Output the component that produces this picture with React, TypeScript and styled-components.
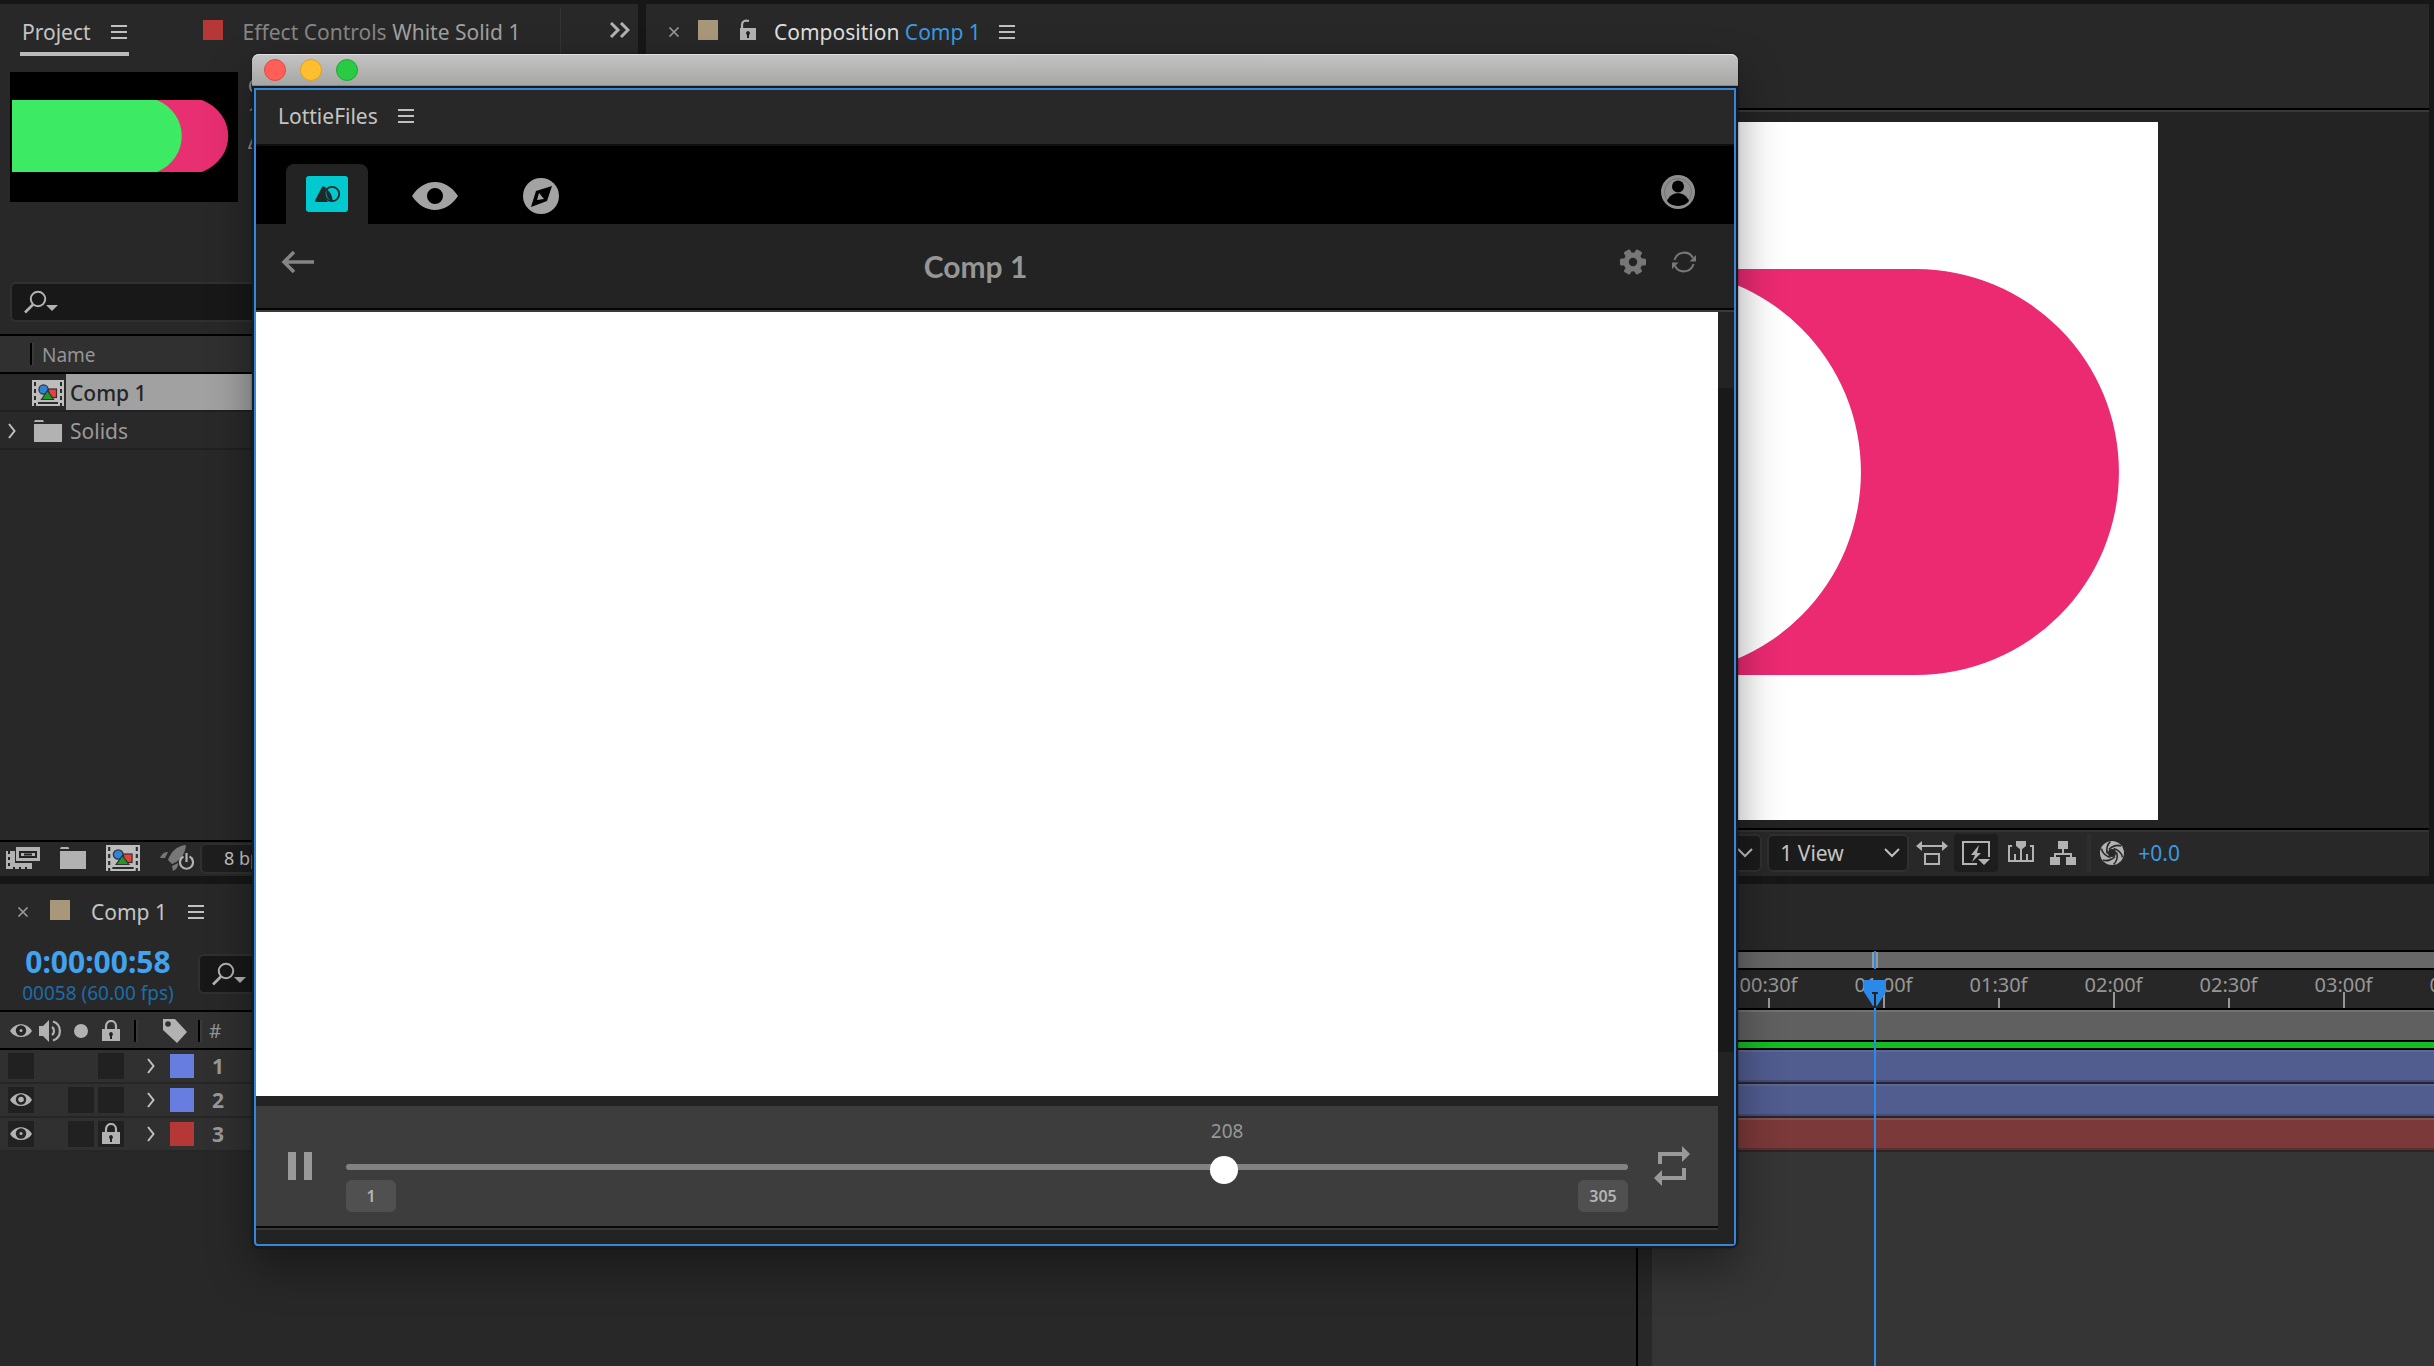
import React from "react";
import styled, { createGlobalStyle } from "styled-components";

const color = {
  gap: "#171717",
  panel: "#282828",
  raised: "#303030",
  well: "#232323",
  field: "#181818",
  fieldEdge: "#303030",
  line: "#000000",
  text: "#c4c4c4",
  muted: "#959595",
  icon: "#b2b2b2",
  blue: "#3b9ae0",
  accent: "#2b8ae8",
  tan: "#a89779",
  red: "#b53837",
  violet: "#687de0",
  pink: "#eb2a72",
};

const GlobalStyle = createGlobalStyle`
  *, *::before, *::after { box-sizing: border-box; }
  body {
    margin: 0;
    background: ${color.gap};
    color: ${color.text};
    font-family: "Noto Sans", "Open Sans", sans-serif;
    font-size: 21px;
    line-height: 28px;
  }
  button, input, select { font: inherit; color: inherit; }
  button { padding: 0; border: 0; background: none; display: flex; align-items: center; justify-content: center; }
  svg { display: block; flex: none; }
`;

const Screen = styled.div`
  position: relative;
  display: grid;
  grid-template-rows: minmax(0, 872fr) minmax(0, 482fr);
  gap: 8px;
  height: 100vh;
  padding-top: 4px;
  overflow: hidden;
`;

const Workspace = styled.div`
  display: grid;
  grid-template-columns: 638px minmax(0, 1fr);
  gap: 8px;
  padding-right: 5px;
`;

const Panel = styled.section`
  display: flex;
  flex-direction: column;
  min-width: 0;
  min-height: 0;
  background: ${color.panel};
`;

/* ---------- shared parts ---------- */

const TabBar = styled.div<{ $start: number }>`
  display: flex;
  align-items: stretch;
  height: 52px;
  padding: 4px 8px 0 ${(p) => p.$start}px;
`;

const Tab = styled.div<{ $gap?: number; $active?: boolean }>`
  display: flex;
  align-items: center;
  gap: ${(p) => p.$gap ?? 20}px;
  padding: 0 ${(p) => (p.$active ? 2 : 0)}px;
  color: ${color.text};
  white-space: nowrap;
  box-shadow: ${(p) => (p.$active ? "inset 0 -4px #bbbbbb" : "none")};
`;

const TabTitle = styled.span<{ $tone?: string }>`
  color: ${(p) => p.$tone ?? color.text};
`;

const Swatch = styled.span<{ $fill: string; $size?: number }>`
  flex: none;
  width: ${(p) => p.$size ?? 20}px;
  height: ${(p) => p.$size ?? 20}px;
  background: ${(p) => p.$fill};

  ${Tab} > & {
    margin-bottom: 4px;
  }
`;

const Divider = styled.span<{ $tone?: string; $before?: number; $height?: number }>`
  flex: none;
  width: 2px;
  height: ${(p) => p.$height ?? 22}px;
  margin-left: ${(p) => p.$before ?? 0}px;
  background: ${(p) => p.$tone ?? color.line};
  box-shadow: 2px 0 ${(p) => p.$tone ?? "#3a3a3a"};
`;

const SearchBox = styled.label`
  display: flex;
  align-items: center;
  gap: 10px;
  height: 40px;
  padding: 0 12px;
  background: ${color.field};
  border: 2px solid ${color.fieldEdge};
  border-radius: 6px;
`;

const SearchInput = styled.input`
  flex: 1;
  min-width: 0;
  border: 0;
  outline: 0;
  background: transparent;
`;

const MenuIcon = () => (
  <svg width="16" height="16" viewBox="0 0 16 16">
    <path d="M0 2h16M0 8h16M0 14h16" stroke="#c0c0c0" strokeWidth="2" />
  </svg>
);

const MenuButton = () => (
  <button aria-label="Panel menu">
    <MenuIcon />
  </button>
);

const CloseButton = () => (
  <button aria-label="Close">
    <svg width="12" height="10" viewBox="0 0 12 10">
      <path d="M1.500 0.500l9 9M10.500 0.500l-9 9" stroke="#999" strokeWidth="1.600" />
    </svg>
  </button>
);

const SearchIcon = () => (
  <svg width="34" height="24" viewBox="0 0 34 24">
    <circle cx="14" cy="9" r="7.200" fill="none" stroke={color.icon} strokeWidth="2" />
    <path d="M9 14.500L1 22.500" stroke={color.icon} strokeWidth="2.600" />
    <path d="M22 15h12l-6 6z" fill={color.icon} />
  </svg>
);

const FolderIcon = ({ width }: { width: number }) => (
  <svg width={width} height="22" viewBox="0 0 28 22" preserveAspectRatio="none">
    <path d="M0 2l1-2h8l1 2z M0 4h28v18h-28z" fill={color.icon} />
  </svg>
);

const CompIcon = ({ width }: { width: number }) => (
  <svg width={width} height="26" viewBox="0 0 32 26" preserveAspectRatio="none">
    <path d="M0 0h32v26h-32z" fill="#bdbdbd" />
    <path d="M3 2v24M29 2v24" stroke="#2b2b2b" strokeWidth="2" strokeDasharray="4 3" />
    <path d="M6 23h20" stroke="#2b2b2b" strokeWidth="2" />
    <rect x="16.500" y="9" width="8" height="8.500" fill="#e8413c" stroke="#333" strokeWidth="1.200" />
    <circle cx="11.500" cy="9.500" r="4.600" fill="#2f84dd" stroke="#333" strokeWidth="1.200" />
    <path d="M15.500 10.500l6 9h-12z" fill="#1d9a2a" stroke="#333" strokeWidth="1.200" />
  </svg>
);

const ChevronRight = () => (
  <svg width="8" height="16" viewBox="0 0 8 16">
    <path d="M1 1l5.500 7L1 15" fill="none" stroke="#c0c0c0" strokeWidth="2" />
  </svg>
);

const ChevronDown = () => (
  <svg width="16" height="10" viewBox="0 0 16 10">
    <path d="M1 1l7 7 7-7" fill="none" stroke="#c0c0c0" strokeWidth="2" />
  </svg>
);

const EyeIcon = ({ faint }: { faint?: boolean }) => (
  <svg width="22" height="16" viewBox="0 0 22 16">
    <path d="M0 8C5-1 17-1 22 8C17 16 5 16 0 8z" fill={color.icon} />
    <circle cx="11" cy="7.500" r="5.200" fill="#252525" />
    <circle cx="11" cy="7.500" r={faint ? 1.5 : 2.8} fill={color.icon} />
  </svg>
);

const LockIcon = () => (
  <svg width="18" height="22" viewBox="0 0 18 22">
    <path d="M4 10V6a5 5 0 0 1 10 0v4" fill="none" stroke={color.icon} strokeWidth="2.200" />
    <path d="M0 9h18v12h-18z" fill={color.icon} />
    <path d="M9 12a2.200 2.200 0 0 1 1 4v3h-2v-3a2.200 2.200 0 0 1 1-4z" fill="#222" />
  </svg>
);

/* ---------- project panel ---------- */

const ProjectTabs = styled(TabBar)`
  gap: 30px;
`;

const EffectTab = styled(Tab)`
  margin-left: 44px;
`;

const TabEdge = styled.span`
  width: 1px;
  margin-left: 10px;
  background: #333333;
`;

const Overflow = styled.button`
  margin-left: auto;
  padding-bottom: 4px;
`;

const Preview = styled.div`
  display: flex;
  gap: 10px;
  padding: 16px 10px 0;
`;

const PreviewFacts = styled.div`
  color: ${color.muted};
  font-size: 19px;
  line-height: 28px;
`;

const ProjectSearch = styled.div`
  padding: 80px 10px 12px;
`;

const ColumnHeader = styled.div`
  display: flex;
  align-items: center;
  height: 40px;
  border: solid ${color.line};
  border-width: 2px 0;
  background: ${color.raised};
  color: ${color.muted};
  font-size: 19px;
`;

const ColumnName = styled.span`
  padding: 2px 0 0 10px;
`;

const Item = styled.div`
  display: flex;
  align-items: stretch;
  height: 38px;
  background: #292929;
  border-bottom: 2px solid #202020;
`;

const ItemToggle = styled.div`
  display: flex;
  align-items: center;
  width: 32px;
  padding: 2px 0 0 8px;
`;

const ItemIcon = styled.div`
  display: flex;
  align-items: center;
  justify-content: center;
  width: 32px;
  margin-right: 2px;
  padding-top: 2px;
`;

const ItemName = styled.div<{ $selected?: boolean }>`
  display: flex;
  flex: 1;
  align-items: center;
  padding: 2px 0 0 4px;
  background: ${(p) => (p.$selected ? "#a1a1a1" : "transparent")};
  color: ${(p) => (p.$selected ? "#242424" : "#9a9a9a")};
  font-weight: ${(p) => (p.$selected ? 500 : 400)};
`;

const Footer = styled.div<{ $end?: boolean }>`
  display: flex;
  align-items: center;
  justify-content: ${(p) => (p.$end ? "flex-end" : "flex-start")};
  margin-top: auto;
  border-top: 2px solid ${color.line};
`;

const ProjectFooter = styled(Footer)`
  gap: 20px;
  height: 36px;
  padding: 0 6px 2px;
`;

const DepthButton = styled.button`
  height: 31px;
  margin-left: -14px;
  padding: 0 22px;
  background: #1e1e1e;
  border: 2px solid ${color.fieldEdge};
  border-radius: 6px;
  font-size: 18px;
  white-space: nowrap;
`;

const ProjectPanel = () => (
  <Panel>
    <ProjectTabs $start={20}>
      <Tab $active>
        <TabTitle>Project</TabTitle>
        <MenuButton />
      </Tab>
      <EffectTab>
        <Swatch $fill={color.red} />
        <span>
          <TabTitle $tone="#858585">Effect Controls </TabTitle>
          <TabTitle $tone="#a0a0a0">White Solid 1</TabTitle>
        </span>
      </EffectTab>
      <TabEdge />
      <Overflow aria-label="More panels">
        <svg width="20" height="16" viewBox="0 0 20 16">
          <path d="M1 1l7 7-7 7M11 1l7 7-7 7" fill="none" stroke={color.icon} strokeWidth="3" />
        </svg>
      </Overflow>
    </ProjectTabs>
    <Preview>
      <svg width="228" height="130" viewBox="0 0 228 130">
        <path d="M0 0h228v130h-228z" fill="#000" />
        <path d="M140 28h52c35 14 35 58 0 72h-52z" fill="#e82f72" />
        <path d="M2 28h145c33 14 33 58 0 72h-145z" fill="#3cea64" />
      </svg>
      <PreviewFacts>
        <div>C</div>
        <div>1</div>
        <div>Δ</div>
      </PreviewFacts>
    </Preview>
    <ProjectSearch>
      <SearchBox>
        <SearchIcon />
        <SearchInput aria-label="Search project" />
      </SearchBox>
    </ProjectSearch>
    <ColumnHeader>
      <Divider $before={30} />
      <ColumnName>Name</ColumnName>
    </ColumnHeader>
    <Item>
      <ItemToggle />
      <ItemIcon>
        <CompIcon width={32} />
      </ItemIcon>
      <ItemName $selected>Comp 1</ItemName>
    </Item>
    <Item>
      <ItemToggle>
        <ChevronRight />
      </ItemToggle>
      <ItemIcon>
        <FolderIcon width={28} />
      </ItemIcon>
      <ItemName>Solids</ItemName>
    </Item>
    <ProjectFooter>
      <button aria-label="Interpret footage">
        <svg width="34" height="24" viewBox="0 0 34 24">
          <path d="M0 5h9v12h17v6h-26z" fill={color.icon} />
          <path d="M9 0h25v16h-25z" fill={color.panel} />
          <path d="M10 1h24v14h-24z" fill={color.icon} />
          <path d="M14 6h16v5h-16z" fill="none" stroke="#222" strokeWidth="2" />
          <path d="M18 8.500h8" stroke="#222" strokeWidth="2" />
          <path d="M3 5v3M3 11v3M3 17v3M8 21v2M14 21v2M20 21v2" stroke="#222" strokeWidth="2" />
        </svg>
      </button>
      <button aria-label="New folder">
        <FolderIcon width={26} />
      </button>
      <button aria-label="New composition">
        <CompIcon width={34} />
      </button>
      <button aria-label="Project settings">
        <svg width="34" height="28" viewBox="0 0 34 28">
          <path d="M26 1C16 2 11 8 8 16l4 4C20 17 25 11 26 1z M8 8c-4 0-6 2-8 6h5z M12 22l6-3c0 4-1 6-5 8z" fill="#777" />
          <path d="M23.500 12.500a6.500 6.500 0 1 0 6 0M26.500 9v9" fill="none" stroke={color.icon} strokeWidth="2.200" />
        </svg>
      </button>
      <DepthButton>8 bpc</DepthButton>
    </ProjectFooter>
  </Panel>
);

/* ---------- composition panel ---------- */

const Viewer = styled.div`
  display: flex;
  flex: 1;
  justify-content: center;
  min-height: 0;
  margin-top: 52px;
  padding: 12px 0 8px;
  background: ${color.well};
  border-top: 2px solid ${color.line};
  box-shadow: inset 0 2px #383838;
`;

const ViewerFooter = styled(Footer)`
  height: 48px;
  padding: 0 249px 0 0;
  box-shadow: inset 0 2px #333333;
`;

const SelectBox = styled.div<{ $width: number }>`
  position: relative;
  display: flex;
  align-items: center;
  width: ${(p) => p.$width}px;
  height: 38px;
  margin-right: 5px;

  svg {
    position: absolute;
    right: 9px;
    pointer-events: none;
  }
`;

const Select = styled.select`
  width: 100%;
  height: 100%;
  padding: 0 30px 0 11px;
  appearance: none;
  background: #1b1b1b;
  border: 2px solid ${color.fieldEdge};
  border-radius: 6px;
`;

const ToolButton = styled.button<{ $on?: boolean; $width: number }>`
  width: ${(p) => p.$width}px;
  height: 38px;
  margin-left: ${(p) => (p.$on ? 4 : 0)}px;
  border-radius: 4px;
  background: ${(p) => (p.$on ? "#1d1d1d" : "transparent")};
`;

const Exposure = styled.button`
  margin-left: 3px;
  color: ${color.blue};
`;

const Aperture = () => (
  <svg width="24" height="24" viewBox="0 0 24 24">
    <circle cx="12" cy="12" r="12" fill={color.icon} />
    <circle cx="12" cy="12" r="4" fill={color.panel} />
    {[0, 60, 120, 180, 240, 300].map((turn) => (
      <path
        key={turn}
        d="M9 8.500C12 5 17 3.500 21 5"
        transform={`rotate(${turn} 12 12)`}
        fill="none"
        stroke={color.panel}
        strokeWidth="1.600"
      />
    ))}
  </svg>
);

const CompositionPanel = () => (
  <Panel>
    <TabBar $start={22}>
      <Tab $gap={18}>
        <CloseButton />
        <Swatch $fill={color.tan} />
        <svg width="20" height="26" viewBox="-3 0 20 26">
          <path d="M3 11V6c0-4 3-5 7-4" fill="none" stroke={color.icon} strokeWidth="2.200" />
          <path d="M1 9h16v12h-16z" fill={color.icon} />
          <path d="M9 12a2.200 2.200 0 0 1 1 4v3h-2v-3a2.200 2.200 0 0 1 1-4z" fill="#222" />
        </svg>
        <span>
          <TabTitle $tone="#dedede">Composition </TabTitle>
          <TabTitle $tone={color.blue}>Comp 1</TabTitle>
        </span>
        <MenuButton />
      </Tab>
    </TabBar>
    <Viewer>
      <svg height="100%" viewBox="0 0 1241 698">
        <path d="M0 0h1241v698h-1241z" fill="#fff" />
        <path d="M741 147h258a203 203 0 0 1 0 406h-258a203 203 0 0 0 0-406z" fill={color.pink} />
      </svg>
    </Viewer>
    <ViewerFooter $end>
      <SelectBox $width={142}>
        <Select aria-label="3D view" />
        <ChevronDown />
      </SelectBox>
      <SelectBox $width={142}>
        <Select aria-label="View layout" defaultValue="1">
          <option value="1">1 View</option>
        </Select>
        <ChevronDown />
      </SelectBox>
      <ToolButton $width={36} aria-label="Pixel aspect ratio">
        <svg width="32" height="24" viewBox="0 0 32 24">
          <path d="M4 5h24" stroke={color.icon} strokeWidth="2" />
          <path d="M0 5l6-5v10zM32 5l-6-5v10z" fill={color.icon} />
          <path d="M9 13h14v10h-14z" fill="none" stroke={color.icon} strokeWidth="2" />
        </svg>
      </ToolButton>
      <ToolButton $on $width={44} aria-label="Fast previews">
        <svg width="28" height="24" viewBox="0 0 28 24">
          <path d="M15 23H1V1h26v15" fill="none" stroke={color.icon} strokeWidth="2" />
          <path d="M17 4l-8 10h4l-3 7 9-9h-4z M16 18h12l-6 6z" fill={color.icon} />
        </svg>
      </ToolButton>
      <ToolButton $width={46} aria-label="Timeline">
        <svg width="26" height="24" viewBox="0 0 26 24">
          <path d="M4 5H1v15h24V5h-3M7 20v-7M13 20v-13M19 20v-7" fill="none" stroke={color.icon} strokeWidth="2" />
          <path d="M8 0h10v5l-5 4-5-4z" fill={color.icon} />
        </svg>
      </ToolButton>
      <ToolButton $width={38} aria-label="Flowchart">
        <svg width="26" height="24" viewBox="0 0 26 24">
          <path d="M8 0h10v8h-10zM0 16h10v8h-10zM16 16h10v8h-10z" fill={color.icon} />
          <path d="M13 8v5M5 17v-4h16v4" fill="none" stroke={color.icon} strokeWidth="2" />
        </svg>
      </ToolButton>
      <Divider $before={5} $height={38} $tone="#2e2e2e" />
      <ToolButton $width={46} aria-label="Reset exposure">
        <Aperture />
      </ToolButton>
      <Exposure>+0.0</Exposure>
    </ViewerFooter>
  </Panel>
);

/* ---------- timeline ---------- */

const Timeline = styled.section`
  display: grid;
  grid-template-columns: 1638fr 14px 782fr;
  background: ${color.panel};
`;

const Outline = styled.div`
  border-right: 2px solid ${color.line};
`;

const TimelineTabs = styled(TabBar)`
  height: 56px;
  padding-top: 0;
`;

const TimeRow = styled.div`
  display: flex;
  align-items: center;
  gap: 18px;
  height: 70px;
  padding: 0 16px;
`;

const TimeReadout = styled.div`
  width: 164px;
  text-align: center;
  white-space: nowrap;
`;

const Timecode = styled.div`
  color: #41a2ee;
  font-size: 30px;
  line-height: 36px;
  font-weight: 700;
`;

const FrameCount = styled.div`
  color: #1c6ca8;
  font-size: 19px;
  line-height: 26px;
`;

const TimelineSearch = styled(SearchBox)`
  width: 400px;
  margin-bottom: 2px;
`;

const LayerHeader = styled.div`
  display: flex;
  align-items: center;
  gap: 4px;
  height: 40px;
  padding: 2px 0 0 8px;
  border: solid ${color.line};
  border-width: 2px 0;
  background: ${color.raised};
  color: ${color.muted};
  font-size: 19px;
`;

const Cell = styled.div<{ $filled?: boolean }>`
  display: flex;
  align-items: center;
  justify-content: center;
  width: 26px;
  height: 26px;
  background: ${(p) => (p.$filled ? "#212121" : "transparent")};
`;

const TagCell = styled.div`
  display: flex;
  justify-content: center;
  width: 54px;
  padding-left: 16px;
`;

const HeaderText = styled.span`
  margin-left: 5px;
`;

const LayerRow = styled.div`
  display: flex;
  align-items: center;
  gap: 4px;
  height: 34px;
  padding-left: 8px;
  background: ${color.raised};
  border-bottom: 2px solid #262626;
`;

const Expand = styled.button`
  width: 30px;
  height: 26px;
  margin-left: 8px;
`;

const LayerNumber = styled.span`
  margin-left: 14px;
  color: #999999;
  font-weight: 700;
`;

const Tracks = styled.div`
  position: relative;
  margin-top: 66px;
  overflow: hidden;
  background: #353535;
`;

const Navigator = styled.div`
  height: 20px;
  border: solid ${color.line};
  border-width: 2px 0;
  background: #676767;
`;

const Ruler = styled.div`
  display: flex;
  height: 38px;
  padding: 1px 0 0 59px;
  background: #272727;
  color: #979797;
  font-size: 20px;
`;

const Mark = styled.div<{ $major: boolean }>`
  display: flex;
  flex: none;
  flex-direction: column;
  align-items: center;
  justify-content: space-between;
  width: 115px;

  &::after {
    content: "";
    width: 2px;
    height: ${(p) => (p.$major ? 16 : 10)}px;
    margin-top: -7px;
    background: #979797;
  }
`;

const WorkArea = styled.div`
  height: 34px;
  border: solid ${color.line};
  border-width: 2px 0;
  background: #606060;
  box-shadow: inset 0 2px #727272;
`;

const CacheBar = styled.div`
  height: 8px;
  background: #13bd22;
  border-bottom: 2px solid ${color.line};
`;

const Bar = styled.div<{ $fill: string; $top: string; $bottom: string }>`
  height: 34px;
  background: ${(p) => p.$fill};
  border-bottom: 2px solid #26262b;
  box-shadow: inset 0 2px ${(p) => p.$top}, inset 0 -2px ${(p) => p.$bottom};
`;

const Playhead = styled.svg`
  position: absolute;
  top: 0;
  left: 211px;
`;

const PlayheadLine = styled.span`
  position: absolute;
  top: 58px;
  bottom: 0;
  left: 222px;
  width: 2px;
  background: ${color.accent};
`;

const layers = [
  { id: 1, fill: color.violet, visible: false, solo: false, locked: false },
  { id: 2, fill: color.violet, visible: true, solo: true, locked: false },
  { id: 3, fill: color.red, visible: true, solo: true, locked: true },
];

const marks = ["00:30f", "01:00f", "01:30f", "02:00f", "02:30f", "03:00f", "03:30f"];

const TimelinePanel = () => (
  <Timeline>
    <Outline>
      <TimelineTabs $start={17}>
        <Tab $gap={21}>
          <CloseButton />
          <Swatch $fill={color.tan} />
          <TabTitle>Comp 1</TabTitle>
          <MenuButton />
        </Tab>
      </TimelineTabs>
      <TimeRow>
        <TimeReadout>
          <Timecode>0:00:00:58</Timecode>
          <FrameCount>00058 (60.00 fps)</FrameCount>
        </TimeReadout>
        <TimelineSearch>
          <SearchIcon />
          <SearchInput aria-label="Search layers" />
        </TimelineSearch>
      </TimeRow>
      <LayerHeader>
        <Cell>
          <EyeIcon faint />
        </Cell>
        <Cell>
          <svg width="24" height="22" viewBox="0 0 24 22">
            <path d="M0 6h4l6-6v22l-6-6H0z" fill={color.icon} />
            <path d="M13 7a5 5 0 0 1 0 8M14 1.500a10 10 0 0 1 0 19" fill="none" stroke={color.icon} strokeWidth="2.200" />
          </svg>
        </Cell>
        <Cell>
          <svg width="14" height="14" viewBox="0 0 14 14">
            <circle cx="7" cy="7" r="7" fill={color.icon} />
          </svg>
        </Cell>
        <Cell>
          <LockIcon />
        </Cell>
        <Divider $before={6} />
        <TagCell>
          <svg width="24" height="24" viewBox="0 0 24 24">
            <path d="M0 0h12l12 13-10 11L0 11z" fill={color.icon} />
            <circle cx="5" cy="5" r="2.800" fill="#303030" />
          </svg>
        </TagCell>
        <Divider />
        <HeaderText>#</HeaderText>
      </LayerHeader>
      {layers.map((layer) => (
        <LayerRow key={layer.id}>
          <Cell $filled>{layer.visible && <EyeIcon faint={layer.locked} />}</Cell>
          <Cell />
          <Cell $filled={layer.solo} />
          <Cell $filled>{layer.locked && <LockIcon />}</Cell>
          <Expand aria-label="Expand layer">
            <ChevronRight />
          </Expand>
          <Swatch $fill={layer.fill} $size={24} />
          <LayerNumber>{layer.id}</LayerNumber>
        </LayerRow>
      ))}
    </Outline>
    <span />
    <Tracks>
      <Navigator />
      <Ruler>
        {marks.map((label, index) => (
          <Mark key={label} $major={index % 2 === 1}>
            {label}
          </Mark>
        ))}
      </Ruler>
      <WorkArea />
      <CacheBar />
      <Bar $fill="#515c8f" $top="#5d6794" $bottom="#434c7c" />
      <Bar $fill="#515c8f" $top="#5d6794" $bottom="#434c7c" />
      <Bar $fill="#7b3939" $top="#86504e" $bottom="#652c2c" />
      <PlayheadLine />
      <Playhead width="24" height="58" viewBox="0 0 24 58">
        <path d="M9 2h6v16h-6z" fill="#999" />
        <path d="M11 1h2v18h-2z" fill={color.accent} />
        <path d="M1 30h22v12l-9 14h-4l-9-14z" fill={color.accent} />
        <path d="M9 43h6M12 43v14" stroke="#222" strokeWidth="2" />
      </Playhead>
    </Tracks>
  </Timeline>
);

/* ---------- floating LottieFiles window ---------- */

const Window = styled.section`
  position: absolute;
  top: 54px;
  left: 252px;
  width: 1486px;
  background: #161c26;
  border-radius: 7px;
  padding: 0 2px 2px;
  box-shadow: 0 20px 44px rgba(0, 0, 0, 0.38), 0 0 2px rgba(0, 0, 0, 0.6);
`;

const TitleBar = styled.header`
  display: flex;
  align-items: center;
  gap: 14px;
  height: 32px;
  margin: 0 -2px 2px;
  padding: 0 12px;
  border-radius: 7px 7px 0 0;
  border-bottom: 1px solid #858585;
  background: linear-gradient(#c4c4c4, #a6a6a4);
  box-shadow: inset 0 1px #e2e2e2;
`;

const TrafficLight = styled.button<{ $fill: string; $edge: string }>`
  width: 22px;
  height: 22px;
  border: 1px solid ${(p) => p.$edge};
  border-radius: 50%;
  background: ${(p) => p.$fill};
`;

const WindowBody = styled.div`
  border: 2px solid #3a86d6;
  border-radius: 0 0 4px 4px;
  background: ${color.well};
`;

const WindowTitle = styled.div`
  display: flex;
  align-items: center;
  gap: 20px;
  height: 56px;
  padding: 0 0 2px 22px;
  background: ${color.panel};
  border-bottom: 2px solid #0e0e0e;
`;

const NavBar = styled.nav`
  display: flex;
  align-items: flex-end;
  gap: 12px;
  height: 78px;
  padding: 0 30px;
  background: #000000;
`;

const NavTab = styled.button<{ $active?: boolean; $width: number }>`
  width: ${(p) => p.$width}px;
  height: 60px;
  padding-top: ${(p) => (p.$active ? 0 : 3)}px;
  border-radius: 8px 8px 0 0;
  background: ${(p) => (p.$active ? color.well : "transparent")};
`;

const Account = styled.button`
  height: 64px;
  margin-left: auto;
  padding-right: 9px;
`;

const CompHeader = styled.div`
  display: flex;
  align-items: center;
  height: 88px;
  padding: 0 38px 3px 25px;
  border-bottom: 2px solid #3a3a3a;
  box-shadow: inset 0 -2px #050505;
`;

const CompTitle = styled.h1`
  flex: 1;
  margin: 0 0 0 16px;
  color: #969696;
  font-family: Lato, "Noto Sans", sans-serif;
  font-size: 30px;
  line-height: 36px;
  font-weight: 700;
  text-align: center;
`;

const HeaderActions = styled.div`
  display: flex;
  gap: 26px;
  padding-bottom: 7px;
`;

const BackButton = styled.button`
  padding-bottom: 7px;
`;

const PlayerArea = styled.div`
  display: grid;
  grid-template-columns: minmax(0, 1fr) 16px;
`;

const ScrollGutter = styled.div`
  padding: 76px 0 192px;
  background: ${color.well};
`;

const ScrollThumb = styled.div`
  height: 100%;
  background: #191919;
`;

const Stage = styled.div`
  height: 784px;
  background: #ffffff;
`;

const Controls = styled.div`
  display: flex;
  gap: 26px;
  height: 122px;
  margin: 10px 0 16px;
  padding: 0 28px 0 32px;
  background: #3d3d3d;
  border-bottom: 2px solid #090909;
  box-shadow: 0 2px #383838;
`;

const ControlButton = styled.button`
  height: 120px;
`;

const Scrubber = styled.div`
  position: relative;
  flex: 1;
  margin-left: 8px;
  padding-top: 47px;
`;

const Range = styled.input`
  display: block;
  width: 100%;
  height: 27px;
  margin: 0;
  appearance: none;
  background: transparent;

  &::-webkit-slider-runnable-track {
    height: 6px;
    border-radius: 3px;
    background: #828282;
  }

  &::-webkit-slider-thumb {
    width: 28px;
    height: 28px;
    margin-top: -8px;
    appearance: none;
    border-radius: 50%;
    background: #ffffff;
  }
`;

const CurrentFrame = styled.output`
  position: absolute;
  top: 11px;
  padding-left: 6px;
  transform: translateX(-50%);
  color: #989898;
  font-size: 19px;
  line-height: 28px;
`;

const Bounds = styled.div`
  display: flex;
  justify-content: space-between;
`;

const Bound = styled.span`
  width: 50px;
  border-radius: 6px;
  background: #505050;
  color: #b4b4b4;
  font-size: 16px;
  line-height: 32px;
  font-weight: 600;
  text-align: center;
`;

const player = { first: 1, last: 305, shown: 208, position: 210.5 };

const LottieWindow = () => {
  const progress = (player.position - player.first) / (player.last - player.first);
  return (
    <Window>
      <TitleBar>
        <TrafficLight aria-label="Close window" $fill="#ff5f57" $edge="#de4a43" />
        <TrafficLight aria-label="Minimise window" $fill="#ffbf2f" $edge="#dda123" />
        <TrafficLight aria-label="Zoom window" $fill="#28cb41" $edge="#1daa31" />
      </TitleBar>
      <WindowBody>
        <WindowTitle>
          <TabTitle>LottieFiles</TabTitle>
          <MenuButton />
        </WindowTitle>
        <NavBar>
          <NavTab $active $width={82} aria-label="Render">
            <svg width="42" height="36" viewBox="0 0 42 36">
              <rect width="42" height="36" rx="3" fill="#00c9cf" />
              <path d="M9 24.500L16 11q1-1.500 3 0l1 1q-3.500 7 2 14H10q-1.500-.5-1-1.500z" fill="#202828" />
              <circle cx="26" cy="18" r="7.200" fill="none" stroke="#202828" strokeWidth="1.800" />
              <path d="M20.500 13q5 3 6.500 12.500q-8-2-6.500-12.500z" fill="#202828" />
            </svg>
          </NavTab>
          <NavTab $width={110} aria-label="Preview">
            <svg width="46" height="28" viewBox="0 0 46 28">
              <path
                fillRule="evenodd"
                d="M0 14C12-4.600 34-4.600 46 14C34 32.600 12 32.600 0 14zM23 6a8 8 0 1 0 0 16a8 8 0 0 0 0-16z"
                fill="#a3a3a3"
              />
            </svg>
          </NavTab>
          <NavTab $width={78} aria-label="Discover">
            <svg width="36" height="36" viewBox="0 0 36 36">
              <circle cx="18" cy="18" r="18" fill="#a3a3a3" />
              <path d="M29 8L24 23L8 29L13 13z" fill="#000" />
              <path d="M16 15L21 21L14 22z" fill="#a3a3a3" />
            </svg>
          </NavTab>
          <Account aria-label="Account">
            <svg width="34" height="34" viewBox="0 0 34 34">
              <circle cx="17" cy="17" r="17" fill="#8e8e8e" />
              <circle cx="17" cy="17" r="13.500" fill="none" stroke="#6c6c6c" strokeWidth="0.800" />
              <circle cx="17" cy="11.500" r="6" fill="#000" />
              <path d="M6 26C10 15.500 24 15.500 28 26C23 32.500 11 32.500 6 26z" fill="#000" />
            </svg>
          </Account>
        </NavBar>
        <CompHeader>
          <BackButton aria-label="Back">
            <svg width="34" height="22" viewBox="0 0 34 22">
              <path d="M13 1L3 11l10 10M3 11h30" fill="none" stroke="#858585" strokeWidth="3.500" />
            </svg>
          </BackButton>
          <CompTitle>Comp 1</CompTitle>
          <HeaderActions>
            <button aria-label="Settings">
              <svg width="26" height="26" viewBox="0 0 26 26">
                {[0, 60, 120].map((turn) => (
                  <rect
                    key={turn}
                    x="9.500"
                    y="0"
                    width="7"
                    height="26"
                    rx="1.500"
                    transform={`rotate(${turn + 30} 13 13)`}
                    fill="#777"
                  />
                ))}
                <circle cx="13" cy="13" r="9.500" fill="#777" />
                <circle cx="13" cy="13" r="4.200" fill={color.well} />
              </svg>
            </button>
            <button aria-label="Refresh">
              <svg width="24" height="24" viewBox="0 0 24 24">
                <path d="M2.500 10A10 10 0 0 1 21 8M21.500 14A10 10 0 0 1 3 16" fill="none" stroke="#777" strokeWidth="2" />
                <path d="M24 5v6.500h-6.500zM0 19v-6.500h6.500z" fill="#777" />
              </svg>
            </button>
          </HeaderActions>
        </CompHeader>
        <PlayerArea>
          <div>
            <Stage />
            <Controls>
              <ControlButton aria-label="Pause">
                <svg width="24" height="28" viewBox="0 0 24 28">
                  <path d="M0 0h8v28h-8zM16 0h8v28h-8z" fill="#999" />
                </svg>
              </ControlButton>
              <Scrubber>
                <CurrentFrame style={{ left: `calc(${progress * 100}% - ${progress * 28 - 14}px)` }}>
                  {player.shown}
                </CurrentFrame>
                <Range
                  type="range"
                  aria-label="Current frame"
                  min={player.first}
                  max={player.last}
                  step={0.5}
                  defaultValue={player.position}
                />
                <Bounds>
                  <Bound>{player.first}</Bound>
                  <Bound>{player.last}</Bound>
                </Bounds>
              </Scrubber>
              <ControlButton aria-label="Loop">
                <svg width="36" height="40" viewBox="0 0 36 40">
                  <path d="M6 18V8h22M30 22v10H8" fill="none" stroke="#999" strokeWidth="4" />
                  <path d="M28 0l8 8-8 8zM8 24l-8 8 8 8z" fill="#999" />
                </svg>
              </ControlButton>
            </Controls>
          </div>
          <ScrollGutter>
            <ScrollThumb />
          </ScrollGutter>
        </PlayerArea>
      </WindowBody>
    </Window>
  );
};

export default function App() {
  return (
    <>
      <GlobalStyle />
      <Screen>
        <Workspace>
          <ProjectPanel />
          <CompositionPanel />
        </Workspace>
        <TimelinePanel />
        <LottieWindow />
      </Screen>
    </>
  );
}
